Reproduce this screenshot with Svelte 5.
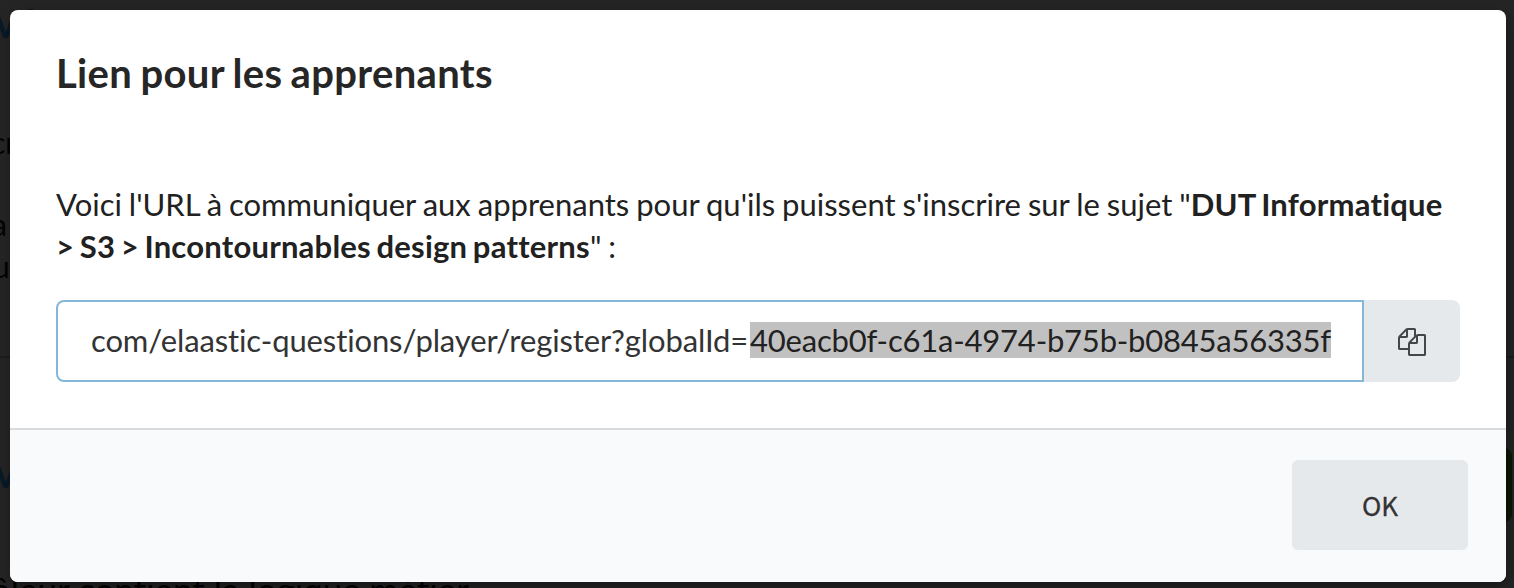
<script>
  const title = 'Lien pour les apprenants';
  const subject = 'DUT Informatique > S3 > Incontournables design patterns';
  const urlPath = 'com/elaastic-questions/player/register?globalId=';
  const urlId = '40eacb0f-c61a-4974-b75b-b0845a56335f';
</script>

<div class="dimmer">
  <span class="behind link" style:left="-5px" style:top="2px">vé</span>
  <span class="behind" style:left="-9px" style:top="121px">cr</span>
  <span class="behind" style:left="-8px" style:top="203px">a</span>
  <span class="behind" style:left="-7px" style:top="245px">u</span>
  <span class="behind link" style:left="-5px" style:top="452px">v</span>
  <span class="behind large" style:left="-9px" style:top="568px">ôleur contient la logique métier</span>
  <i class="behind rule"></i>
  <i class="behind green"></i>

  <section class="modal">
    <h1>{title}</h1>
    <div class="content">
      <p>
        Voici l'URL à communiquer aux apprenants pour qu'ils puissent s'inscrire sur le sujet "<b>{subject}</b>" :
      </p>
      <div class="field">
        <div class="input"><span>{urlPath}</span><mark>{urlId}</mark></div>
        <button class="copy" aria-label="Copier">
          <svg viewBox="0 0 1792 1792" width="28" height="28">
            <path d="M1696 384q40 0 68 28t28 68v1216q0 40-28 68t-68 28h-960q-40 0-68-28t-28-68v-288h-544q-40 0-68-28t-28-68v-672q0-40 20-88t48-76l408-408q28-28 76-48t88-20h416q40 0 68 28t28 68v328q68-40 128-40h416zm-544 213l-299 299h299v-299zm-640-384l-299 299h299v-299zm196 647l316-316v-416h-384v416q0 40-28 68t-68 28h-416v640h512v-256q0-40 20-88t48-76zm956 804v-1152h-384v416q0 40-28 68t-68 28h-416v640h896z" />
          </svg>
        </button>
      </div>
    </div>
    <footer><button class="ok">OK</button></footer>
  </section>
</div>

<style>
  .dimmer {
    position: relative;
    box-sizing: border-box;
    width: 1514px;
    height: 588px;
    padding: 10px 8px 6px 10px;
    overflow: hidden;
    background: #262626;
    font-family: Lato, sans-serif;
    font-variant-ligatures: none;
    color: #212121;
  }
  .behind {
    position: absolute;
    font-size: 30px;
    line-height: 42px;
    white-space: nowrap;
    color: #030303;
  }
  .large {
    font-size: 35px;
  }
  .link {
    font-size: 40px;
    font-weight: 700;
    color: #0a1a28;
  }
  .rule {
    left: 0;
    top: 356px;
    width: 1514px;
    height: 2px;
    background: #1e1e1e;
  }
  .green {
    left: 1480px;
    top: 448px;
    width: 32px;
    height: 74px;
    border-radius: 8px;
    background: #0d1a06;
  }
  .modal {
    position: relative;
    display: flex;
    flex-direction: column;
    height: 572px;
    border-radius: 8px;
    overflow: hidden;
    background: #fff;
    box-shadow: 2px 6px 6px 0 rgba(0, 0, 0, 0.2), 2px 6px 30px 4px rgba(0, 0, 0, 0.2);
  }
  h1 {
    margin: 0;
    padding: 37px 46px 0;
    font-size: 40px;
    line-height: 52px;
    font-weight: 700;
    letter-spacing: 0.32px;
    word-spacing: -1.7px;
    color: #262626;
  }
  .content {
    flex: 1;
    padding: 84px 46px 0;
  }
  p {
    margin: 0;
    font-size: 31px;
    line-height: 42px;
    word-spacing: -1px;
  }
  b {
    letter-spacing: 0.22px;
    word-spacing: -2.2px;
  }
  .field {
    display: flex;
    height: 82px;
    margin-top: 33px;
  }
  .input {
    display: flex;
    align-items: center;
    box-sizing: border-box;
    width: 1308px;
    padding: 0 0 2px 33px;
    border: 2px solid #85b7d9;
    border-radius: 8px 0 0 8px;
    font-size: 31px;
    line-height: 36px;
    white-space: nowrap;
    color: #333;
  }
  .input span,
  mark {
    height: 36px;
  }
  .input span {
    width: 659px;
    letter-spacing: -0.12px;
  }
  mark {
    letter-spacing: -0.21px;
    background: #c1c1c1;
    color: #212121;
  }
  button {
    display: flex;
    align-items: center;
    justify-content: center;
    margin: 0;
    padding: 0;
    border: 0;
    background: #e6e9eb;
    color: #333;
  }
  .copy {
    width: 96px;
    border-radius: 0 8px 8px 0;
  }
  svg {
    fill: #454647;
    margin-top: 2px;
  }
  footer {
    display: flex;
    justify-content: flex-end;
    box-sizing: border-box;
    height: 154px;
    padding: 30px 38px 32px;
    border-top: 2px solid #d9dadb;
    background: #f9fafc;
  }
  .ok {
    width: 176px;
    height: 90px;
    border-radius: 6px;
    font: 400 26px/28px "Noto Sans CJK SC", sans-serif;
    -webkit-text-stroke: 0.3px #333;
  }
</style>
